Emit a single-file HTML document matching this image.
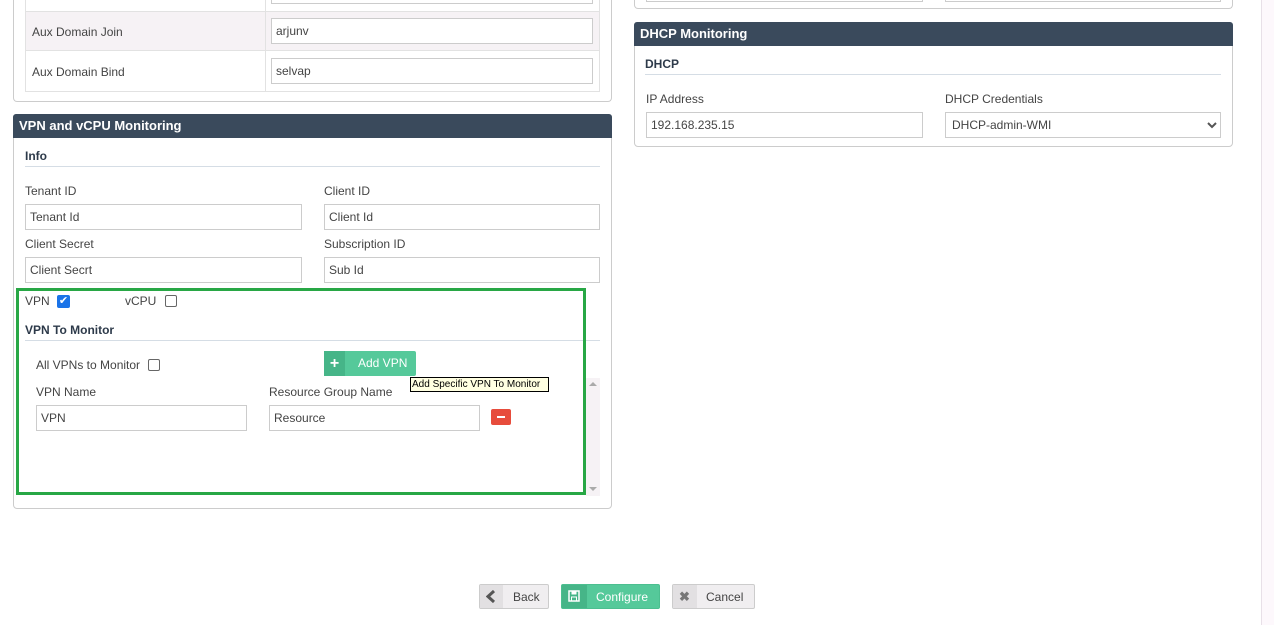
<!DOCTYPE html>
<html><head><meta charset="utf-8"><style>
*{box-sizing:border-box;margin:0;padding:0}
body{width:1274px;height:625px;background:#fff;position:relative;overflow:hidden;font-family:"Liberation Sans",sans-serif;font-size:12px;color:#333}
.a{position:absolute}
.t{position:absolute;font-size:12px;color:#444;white-space:nowrap;line-height:14px}
.b{position:absolute;font-weight:bold;color:#2d3a4a;font-size:12px;line-height:14px}
.in{position:absolute;border:1px solid #ccc;background:#fff;height:26px;padding-left:4px;line-height:25px;font-size:12px;color:#444;white-space:nowrap}
.hdr{position:absolute;background:#3a4a5c;color:#fff;font-weight:bold;font-size:13px;padding-left:6px;line-height:24px;border-radius:3px 3px 0 0}
.pan{position:absolute;border:1px solid #ccc;border-radius:4px}
.cb{position:absolute;width:12px;height:12px;border:1px solid #666;border-radius:2px;background:#fff}
.hr{position:absolute;height:1px;background:#d5dde5}
.btn{position:absolute;height:25px;border:1px solid #ccc;border-radius:2px;background:#f0eef0;font-size:12px;color:#444;line-height:24px}
</style></head><body>
<div class="pan" style="left:13px;top:-10px;width:599px;height:112px;border-top:none"></div>
<div class="a" style="left:25px;top:-1px;width:575px;height:93px;border:1px solid #e2e2e2;border-top:none"></div>
<div class="a" style="left:26px;top:11px;width:573px;height:40px;background:#f6f2f5;border-top:1px solid #e2e2e2;border-bottom:1px solid #e2e2e2"></div>
<div class="a" style="left:265px;top:0;width:1px;height:91px;background:#e2e2e2"></div>
<div class="in" style="left:271px;top:-22px;width:322px"></div>
<div class="t" style="left:32px;top:25px">Aux Domain Join</div>
<div class="in" style="left:271px;top:18px;width:322px">arjunv</div>
<div class="t" style="left:32px;top:65px">Aux Domain Bind</div>
<div class="in" style="left:271px;top:58px;width:322px">selvap</div>

<div class="pan" style="left:13px;top:114px;width:599px;height:395px"></div>
<div class="hdr" style="left:13px;top:114px;width:599px;height:24px">VPN and vCPU Monitoring</div>
<div class="b" style="left:25px;top:149px">Info</div>
<div class="hr" style="left:25px;top:166px;width:575px"></div>
<div class="t" style="left:25px;top:184px">Tenant ID</div>
<div class="t" style="left:324px;top:184px">Client ID</div>
<div class="in" style="left:25px;top:204px;width:277px">Tenant Id</div>
<div class="in" style="left:324px;top:204px;width:276px">Client Id</div>
<div class="t" style="left:25px;top:237px">Client Secret</div>
<div class="t" style="left:324px;top:237px">Subscription ID</div>
<div class="in" style="left:25px;top:257px;width:277px">Client Secrt</div>
<div class="in" style="left:324px;top:257px;width:276px">Sub Id</div>

<div class="a" style="left:586px;top:378px;width:14px;height:118px;background:#f6f2f5"></div>
<div class="a" style="left:589px;top:382px;width:0;height:0;border:4px solid transparent;border-bottom-color:#aaa;border-top:none"></div>
<div class="a" style="left:589px;top:487px;width:0;height:0;border:4px solid transparent;border-top-color:#aaa;border-bottom:none"></div>
<div class="t" style="left:25px;top:294px">VPN</div>
<div class="a" style="left:57px;top:295px;width:13px;height:13px;background:#1a73e8;border-radius:2px;color:#fff;font-size:11px;line-height:13px;text-align:center">✔</div>
<div class="t" style="left:125px;top:294px">vCPU</div>
<div class="cb" style="left:165px;top:295px"></div>
<div class="b" style="left:25px;top:323px">VPN To Monitor</div>
<div class="hr" style="left:25px;top:340px;width:575px"></div>
<div class="t" style="left:36px;top:358px">All VPNs to Monitor</div>
<div class="cb" style="left:148px;top:359px"></div>
<div class="a" style="left:324px;top:351px;width:92px;height:25px;background:#55c99a;border-radius:2px;color:#fff;line-height:25px">
 <div class="a" style="left:0;top:0;width:21px;height:25px;background:#46b588;text-align:center;font-weight:bold;font-size:16px">+</div>
 <span class="a" style="left:34px;top:0">Add VPN</span></div>
<div class="a" style="left:410px;top:377px;width:139px;height:15px;background:#ffffe1;border:1px solid #000;font-size:10px;line-height:13px;padding-left:1px;color:#000;white-space:nowrap;overflow:hidden">Add Specific VPN To Monitor</div>
<div class="t" style="left:36px;top:385px">VPN Name</div>
<div class="t" style="left:269px;top:385px">Resource Group Name</div>
<div class="in" style="left:36px;top:405px;width:211px">VPN</div>
<div class="in" style="left:269px;top:405px;width:211px">Resource</div>
<div class="a" style="left:491px;top:409px;width:20px;height:16px;background:#e74c3c;border-radius:2px"><div class="a" style="left:6px;top:7px;width:8px;height:2px;background:#fff"></div></div>
<div class="a" style="left:16px;top:288px;width:570px;height:207px;border:3px solid #28a745"></div>

<div class="pan" style="left:634px;top:-10px;width:599px;height:19px;border-top:none"></div>
<div class="in" style="left:646px;top:-24px;width:277px"></div>
<div class="in" style="left:945px;top:-24px;width:276px"></div>
<div class="pan" style="left:634px;top:22px;width:599px;height:125px"></div>
<div class="hdr" style="left:634px;top:22px;width:599px;height:24px">DHCP Monitoring</div>
<div class="b" style="left:645px;top:57px">DHCP</div>
<div class="hr" style="left:645px;top:74px;width:576px"></div>
<div class="t" style="left:646px;top:92px">IP Address</div>
<div class="t" style="left:945px;top:92px">DHCP Credentials</div>
<div class="in" style="left:646px;top:112px;width:277px">192.168.235.15</div>
<div class="in" style="left:945px;top:112px;width:276px;padding-left:6px">DHCP-admin-WMI<svg class="a" style="left:261px;top:9px" width="10" height="7"><path d="M1 1L5 5L9 1" stroke="#555" stroke-width="2" fill="none"/></svg></div>
<div class="a" style="left:1261px;top:0;width:1px;height:625px;background:#e8e0e8"></div>
<div class="a" style="left:1262px;top:0;width:12px;height:625px;background:#fdf8fc"></div>

<div class="btn" style="left:479px;top:584px;width:70px"><div class="a" style="left:0;top:0;width:23px;height:23px;background:#e2e0e2"></div><svg class="a" style="left:6px;top:5px" width="10" height="13"><path d="M8 1L2 6.5L8 12" stroke="#555" stroke-width="3" fill="none"/></svg><span class="a" style="left:33px">Back</span></div>
<div class="btn" style="left:561px;top:584px;width:99px;background:#55c99a;border-color:#4cbf90;color:#fff"><div class="a" style="left:0;top:0;width:25px;height:23px;background:#46b588"></div><svg class="a" style="left:6px;top:5px" width="12" height="12"><rect x="1" y="1" width="10" height="10" fill="none" stroke="#fff" stroke-width="1.5"/><rect x="3.5" y="1" width="5" height="3.5" fill="#fff"/><rect x="3.5" y="7" width="5" height="4" fill="none" stroke="#fff"/></svg><span class="a" style="left:34px">Configure</span></div>
<div class="btn" style="left:672px;top:584px;width:83px"><div class="a" style="left:0;top:0;width:24px;height:23px;background:#e2e0e2"></div><span class="a" style="left:6px;top:0;font-weight:bold;color:#777;font-size:13px">✖</span><span class="a" style="left:33px">Cancel</span></div>
</body></html>
